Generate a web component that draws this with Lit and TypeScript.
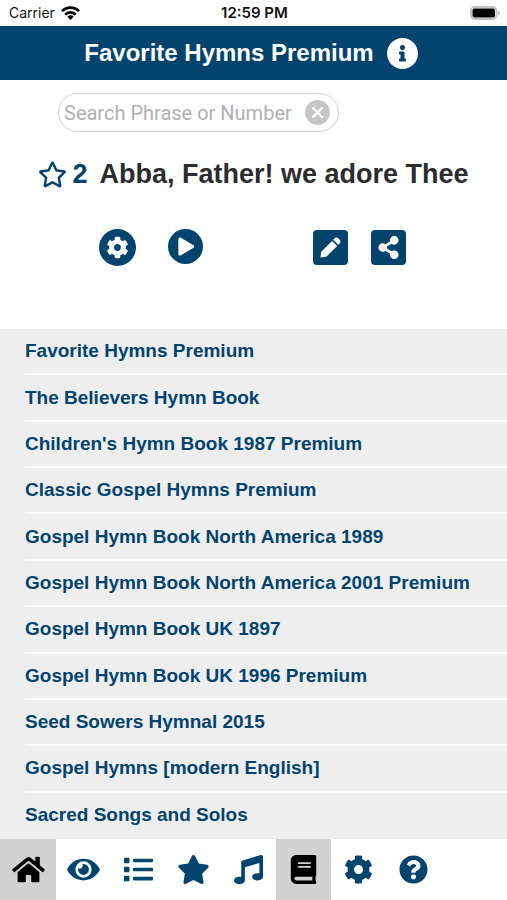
import { LitElement, html, css, svg } from "lit";
import { customElement, state } from "lit/decorators.js";
import { classMap } from "lit/directives/class-map.js";

interface Glyph {
  box: string;
  d: string;
}

const glyphs: Record<string, Glyph> = {
  home: {
    box: "0 0 576 512",
    d: "M280.37 148.26L96 300.11V464a16 16 0 0 0 16 16l112.06-.29a16 16 0 0 0 15.92-16V368a16 16 0 0 1 16-16h64a16 16 0 0 1 16 16v95.64a16 16 0 0 0 16 16.05L464 480a16 16 0 0 0 16-16V300L295.67 148.26a12.19 12.19 0 0 0-15.3 0zM571.6 251.47L488 182.56V44.05a12 12 0 0 0-12-12h-56a12 12 0 0 0-12 12v72.61L318.47 43a48 48 0 0 0-61 0L4.34 251.47a12 12 0 0 0-1.6 16.9l25.5 31A12 12 0 0 0 45.15 301l235.22-193.74a12.19 12.19 0 0 1 15.3 0L530.9 301a12 12 0 0 0 16.9-1.6l25.5-31a12 12 0 0 0-1.7-16.93z",
  },
  eye: {
    box: "0 0 576 512",
    d: "M572.52 241.4C518.29 135.59 410.93 64 288 64S57.68 135.64 3.48 241.41a32.35 32.35 0 0 0 0 29.19C57.71 376.41 165.07 448 288 448s230.32-71.64 284.52-177.41a32.35 32.35 0 0 0 0-29.19zM288 400a144 144 0 1 1 144-144 143.93 143.93 0 0 1-144 144zm0-240a95.31 95.31 0 0 0-25.31 3.79 47.85 47.85 0 0 1-66.9 66.9A95.78 95.78 0 1 0 288 160z",
  },
  list: {
    box: "-32 0 576 512",
    d: "M80 368H16a16 16 0 0 0-16 16v64a16 16 0 0 0 16 16h64a16 16 0 0 0 16-16v-64a16 16 0 0 0-16-16zm0-320H16A16 16 0 0 0 0 64v64a16 16 0 0 0 16 16h64a16 16 0 0 0 16-16V64a16 16 0 0 0-16-16zm0 160H16a16 16 0 0 0-16 16v64a16 16 0 0 0 16 16h64a16 16 0 0 0 16-16v-64a16 16 0 0 0-16-16zm416 176H176a16 16 0 0 0-16 16v32a16 16 0 0 0 16 16h320a16 16 0 0 0 16-16v-32a16 16 0 0 0-16-16zm0-320H176a16 16 0 0 0-16 16v32a16 16 0 0 0 16 16h320a16 16 0 0 0 16-16V80a16 16 0 0 0-16-16zm0 160H176a16 16 0 0 0-16 16v32a16 16 0 0 0 16 16h320a16 16 0 0 0 16-16v-32a16 16 0 0 0-16-16z",
  },
  star: {
    box: "0 0 576 512",
    d: "M259.3 17.8L194 150.2 47.9 171.5c-26.2 3.8-36.7 36.1-17.7 54.6l105.7 103-25 145.5c-4.5 26.3 23.2 46 46.4 33.7L288 439.6l130.7 68.7c23.2 12.2 50.9-7.4 46.4-33.7l-25-145.5 105.7-103c19-18.5 8.5-50.8-17.7-54.6L382 150.2 316.7 17.8c-11.7-23.6-45.6-23.9-57.4 0z",
  },
  starOutline: {
    box: "0 0 576 512",
    d: "M528.1 171.5L382 150.2 316.7 17.8c-11.7-23.6-45.6-23.9-57.4 0L194 150.2 47.9 171.5c-26.2 3.8-36.7 36.1-17.7 54.6l105.7 103-25 145.5c-4.5 26.3 23.2 46 46.4 33.7L288 439.6l130.7 68.7c23.2 12.2 50.9-7.4 46.4-33.7l-25-145.5 105.7-103c19-18.5 8.5-50.8-17.7-54.6zM388.6 312.3l23.7 138.4L288 385.4l-124.3 65.3 23.7-138.4-100.6-98 139-20.2 62.2-126 62.2 126 139 20.2-100.6 98z",
  },
  music: {
    box: "-32 0 576 512",
    d: "M470.38 1.51L150.41 96A32 32 0 0 0 128 126.51v261.41A139 139 0 0 0 96 384c-53 0-96 28.66-96 64s43 64 96 64 96-28.66 96-64V214.32l256-75v184.61a138.4 138.4 0 0 0-32-3.93c-53 0-96 28.66-96 64s43 64 96 64 96-28.65 96-64V32a32 32 0 0 0-41.62-30.49z",
  },
  book: {
    box: "-64 0 576 512",
    d: "M448 360V24c0-13.3-10.7-24-24-24H96C43 0 0 43 0 96v320c0 53 43 96 96 96h328c13.3 0 24-10.7 24-24v-16c0-7.5-3.5-14.3-8.9-18.7-4.2-15.4-4.2-59.3 0-74.7 5.4-4.3 8.9-11.1 8.9-18.6zM128 134c0-3.3 2.7-6 6-6h212c3.3 0 6 2.7 6 6v20c0 3.3-2.7 6-6 6H134c-3.3 0-6-2.7-6-6v-20zm0 64c0-3.3 2.7-6 6-6h212c3.3 0 6 2.7 6 6v20c0 3.3-2.7 6-6 6H134c-3.3 0-6-2.7-6-6v-20zm253.4 250H96c-17.7 0-32-14.3-32-32 0-17.6 14.4-32 32-32h285.4c-1.9 17.1-1.9 46.9 0 64z",
  },
  cog: {
    box: "-32 0 576 512",
    d: "M487.4 315.7l-42.6-24.6c4.3-23.2 4.3-47 0-70.2l42.6-24.6c4.9-2.8 7.1-8.6 5.5-14-11.1-35.6-30-67.8-54.7-94.6-3.8-4.1-10-5.1-14.8-2.3L380.8 110c-17.9-15.4-38.5-27.3-60.8-35.1V25.8c0-5.6-3.9-10.5-9.4-11.7-36.7-8.2-74.3-7.8-109.2 0-5.5 1.2-9.4 6.1-9.4 11.7V75c-22.2 7.9-42.8 19.8-60.8 35.1L88.7 85.5c-4.9-2.8-11-1.9-14.8 2.3-24.7 26.7-43.6 58.9-54.7 94.6-1.7 5.4.6 11.2 5.5 14L67.3 221c-4.3 23.2-4.3 47 0 70.2l-42.6 24.6c-4.9 2.8-7.1 8.6-5.5 14 11.1 35.6 30 67.8 54.7 94.6 3.8 4.1 10 5.1 14.8 2.3l42.6-24.6c17.9 15.4 38.5 27.3 60.8 35.1v49.2c0 5.6 3.9 10.5 9.4 11.7 36.7 8.2 74.3 7.8 109.2 0 5.5-1.2 9.4-6.1 9.4-11.7v-49.2c22.2-7.9 42.8-19.8 60.8-35.1l42.6 24.6c4.9 2.8 11 1.9 14.8-2.3 24.7-26.7 43.6-58.9 54.7-94.6 1.5-5.5-.7-11.3-5.6-14.1zM256 336c-44.1 0-80-35.9-80-80s35.9-80 80-80 80 35.9 80 80-35.9 80-80 80z",
  },
  help: {
    box: "-32 0 576 512",
    d: "M504 256c0 136.997-111.043 248-248 248S8 392.997 8 256C8 119.083 119.043 8 256 8s248 111.083 248 248zM262.655 90c-54.497 0-89.255 22.957-116.549 63.758-3.536 5.286-2.353 12.415 2.715 16.258l34.699 26.31c5.205 3.947 12.621 3.008 16.665-2.122 17.864-22.658 30.113-35.797 57.303-35.797 20.429 0 45.698 13.148 45.698 32.958 0 14.976-12.363 22.667-32.534 33.976C247.128 238.528 216 254.941 216 296v4c0 6.627 5.373 12 12 12h56c6.627 0 12-5.373 12-12v-1.333c0-28.462 83.186-29.647 83.186-106.667 0-58.002-60.165-102-116.531-102zM256 338c-25.365 0-46 20.635-46 46 0 25.364 20.635 46 46 46s46-20.636 46-46c0-25.365-20.635-46-46-46z",
  },
  info: {
    box: "8 8 496 496",
    d: "M256 8C119.043 8 8 119.083 8 256c0 136.997 111.043 248 248 248s248-111.003 248-248C504 119.083 392.957 8 256 8zm0 110c23.196 0 42 18.804 42 42s-18.804 42-42 42-42-18.804-42-42 18.804-42 42-42zm56 254c0 6.627-5.373 12-12 12h-88c-6.627 0-12-5.373-12-12v-24c0-6.627 5.373-12 12-12h12v-64h-12c-6.627 0-12-5.373-12-12v-24c0-6.627 5.373-12 12-12h64c6.627 0 12 5.373 12 12v100h12c6.627 0 12 5.373 12 12v24z",
  },
  pen: {
    box: "0 0 20 20",
    d: "M1.200 14L11.500 3.700l4.800 4.800L6 18.800l-5 .8a.6.6 0 0 1-.6-.6zM12.600 2.600l1.300-1.300a2.400 2.400 0 0 1 3.400 0l1.400 1.400a2.400 2.400 0 0 1 0 3.400l-1.300 1.300z",
  },
  share: {
    box: "-32 0 512 512",
    d: "M352 320c-22.608 0-43.387 7.819-59.79 20.895l-102.486-64.054a96.551 96.551 0 0 0 0-41.683l102.486-64.054C308.613 184.181 329.392 192 352 192c53.019 0 96-42.981 96-96S405.019 0 352 0s-96 42.981-96 96c0 7.158.79 14.13 2.276 20.841L155.79 180.895C139.387 167.819 118.608 160 96 160c-53.019 0-96 42.981-96 96s42.981 96 96 96c22.608 0 43.387-7.819 59.79-20.895l102.486 64.054A96.301 96.301 0 0 0 256 416c0 53.019 42.981 96 96 96s96-42.981 96-96-42.981-96-96-96z",
  },
  play: {
    box: "0 0 24 24",
    d: "M4.500 4.200c0-1.300 1.200-2.100 2.400-1.500l13.400 8c1 .6 1 2 0 2.600l-13.400 8c-1.200.6-2.400-.2-2.400-1.500z",
  },
};

const icon = (name: string, cls: string) => html`
  <svg class=${cls} viewBox=${glyphs[name].box} aria-hidden="true">
    ${svg`<path fill="currentColor" d=${glyphs[name].d}></path>`}
  </svg>
`;

const books = [
  "Favorite Hymns Premium",
  "The Believers Hymn Book",
  "Children's Hymn Book 1987 Premium",
  "Classic Gospel Hymns Premium",
  "Gospel Hymn Book North America 1989",
  "Gospel Hymn Book North America 2001 Premium",
  "Gospel Hymn Book UK 1897",
  "Gospel Hymn Book UK 1996 Premium",
  "Seed Sowers Hymnal 2015",
  "Gospel Hymns [modern English]",
  "Sacred Songs and Solos",
];

const tabs = [
  { name: "home", label: "Home" },
  { name: "eye", label: "View" },
  { name: "list", label: "Index" },
  { name: "star", label: "Favorites" },
  { name: "music", label: "Music" },
  { name: "book", label: "Books" },
  { name: "cog", label: "Settings" },
  { name: "help", label: "Help" },
];

@customElement("app-root")
export class AppRoot extends LitElement {
  @state() private active = "book";
  @state() private query = "";

  static styles = css`
    :host {
      --navy: #03446f;
      display: flex;
      flex-direction: column;
      min-height: 100vh;
      background: #fff;
      color: var(--navy);
      font-family: "Liberation Sans", Arial, sans-serif;
    }
    * {
      box-sizing: border-box;
    }
    button {
      display: flex;
      align-items: center;
      justify-content: center;
      padding: 0;
      border: 0;
      background: none;
      color: inherit;
      font: inherit;
      cursor: pointer;
    }
    svg {
      display: block;
      flex: none;
    }
    .status {
      display: grid;
      grid-template-columns: 1fr auto 1fr;
      align-items: center;
      height: 26px;
      padding: 0 7px 0 9px;
      color: #111;
      font: 14px/26px Inter, sans-serif;
    }
    .carrier {
      display: flex;
      align-items: center;
      gap: 6px;
    }
    .wifi {
      width: 19px;
      height: 14px;
    }
    .clock {
      font-size: 15px;
      font-weight: 600;
    }
    .battery {
      justify-self: end;
      width: 30px;
      height: 14px;
    }
    .bar {
      display: flex;
      align-items: center;
      justify-content: center;
      gap: 13px;
      height: 54px;
      padding-right: 5px;
      background: var(--navy);
      color: #fff;
    }
    .bar h1 {
      margin: 0;
      font-size: 24px;
      line-height: 32px;
    }
    .info {
      width: 31px;
      height: 31px;
    }
    .search {
      display: flex;
      align-items: center;
      width: 281px;
      height: 39px;
      margin: 13px 0 0 58px;
      padding: 0 8px 0 5px;
      border: 1px solid #d2d2d4;
      border-radius: 20px;
    }
    .search input {
      flex: 1;
      min-width: 0;
      padding: 0;
      border: 0;
      outline: 0;
      background: none;
      color: #333;
      font: 20px/24px Roboto, sans-serif;
    }
    .search input::placeholder {
      color: #b0b0b2;
      opacity: 1;
    }
    .clear {
      width: 25px;
      height: 25px;
    }
    .hymn {
      display: flex;
      align-items: center;
      justify-content: center;
      height: 36px;
      margin-top: 24px;
      font-size: 27px;
      line-height: 36px;
      font-weight: 700;
    }
    .fav {
      gap: 5px;
      margin-right: 12px;
    }
    .hollow {
      width: 29px;
      height: 27px;
    }
    .hymn h2 {
      margin: 0;
      color: #2c2c2e;
      font: inherit;
    }
    .actions {
      display: flex;
      justify-content: space-between;
      align-items: center;
      margin: 37px 101px 63px 99px;
    }
    .group {
      display: flex;
    }
    .left {
      gap: 32px;
    }
    .right {
      gap: 23px;
    }
    .action {
      width: 35px;
      height: 35px;
      border-radius: 4px;
      background: var(--navy);
      color: #fff;
    }
    .round {
      border-radius: 50%;
    }
    .large {
      width: 37px;
      height: 37px;
    }
    .medium {
      width: 25px;
      height: 25px;
    }
    .small {
      width: 23px;
      height: 23px;
    }
    .tiny {
      width: 21px;
      height: 21px;
    }
    .books {
      display: flex;
      flex: 1;
      flex-direction: column;
      margin: 0;
      padding: 0 0 0 25px;
      background: #eee;
      list-style: none;
    }
    .books li {
      display: flex;
      flex: 1;
      min-height: 44px;
      border-bottom: 2px solid #fafafa;
    }
    .books li:last-child {
      border-bottom-color: transparent;
    }
    .books a {
      flex: 1;
      align-self: center;
      color: inherit;
      font-size: 19px;
      line-height: 24px;
      font-weight: 700;
      text-decoration: none;
      white-space: nowrap;
    }
    .tabs {
      display: grid;
      grid-template-columns: 56px repeat(7, 55px);
      height: 61px;
      background: #fff;
    }
    .tab.shaded {
      background: #d2d2d2;
      color: #000;
    }
    .tabicon {
      width: 33px;
      height: 29px;
    }
  `;

  private onInput(e: Event) {
    this.query = (e.target as HTMLInputElement).value;
  }

  render() {
    return html`
      <div class="status">
        <div class="carrier">
          <span>Carrier</span>
          <svg class="wifi" viewBox="0 0 19 14" aria-hidden="true">
            <g fill="none" stroke="#000" stroke-width="2.600">
              <path d="M1 5.200a12 12 0 0 1 17 0"></path>
              <path d="M4.200 8.600a7.500 7.500 0 0 1 10.600 0"></path>
            </g>
            <path d="M6.300 10.700a4.500 4.500 0 0 1 6.400 0L9.500 13.900z"></path>
          </svg>
        </div>
        <span class="clock">12:59 PM</span>
        <svg class="battery" viewBox="0 0 30 14" aria-hidden="true">
          <rect x="1" y="1" width="25.500" height="12" rx="4" fill="#fff" stroke="#c2c2c2" stroke-width="2"></rect>
          <rect x="2.500" y="2.500" width="22.500" height="9" rx="2"></rect>
          <path d="M28.200 4.500c2 .8 2 4.200 0 5z" fill="#b4b4b4"></path>
        </svg>
      </div>
      <header class="bar">
        <h1>Favorite Hymns Premium</h1>
        <button aria-label="About">${icon("info", "info")}</button>
      </header>
      <main>
        <div class="search">
          <input
            type="text"
            aria-label="Search hymns"
            placeholder="Search Phrase or Number"
            .value=${this.query}
            @input=${this.onInput}
          />
          <button aria-label="Clear search" @click=${() => (this.query = "")}>
            <svg class="clear" viewBox="0 0 25 25" aria-hidden="true">
              <circle cx="12.500" cy="12.500" r="12.500" fill="#c6c6c8"></circle>
              <path d="M7.500 7.500l10 10m0-10l-10 10" stroke="#fff" stroke-width="2.400"></path>
            </svg>
          </button>
        </div>
        <div class="hymn">
          <button class="fav" aria-label="Favorite hymn 2">
            ${icon("starOutline", "hollow")}<span>2</span>
          </button>
          <h2>Abba, Father! we adore Thee</h2>
        </div>
        <div class="actions">
          <div class="group left">
            <button class="action round large" aria-label="Hymn settings">${icon("cog", "medium")}</button>
            <button class="action round" aria-label="Play">${icon("play", "small")}</button>
          </div>
          <div class="group right">
            <button class="action" aria-label="Edit">${icon("pen", "tiny")}</button>
            <button class="action" aria-label="Share">${icon("share", "small")}</button>
          </div>
        </div>
      </main>
      <ul class="books">
        ${books.map((title) => html`<li><a href="#">${title}</a></li>`)}
      </ul>
      <nav class="tabs">
        ${tabs.map(
          (t) => html`
            <button
              class=${classMap({ tab: true, shaded: t.name === "home" || t.name === this.active })}
              aria-label=${t.label}
              @click=${() => (this.active = t.name)}
            >
              ${icon(t.name, "tabicon")}
            </button>
          `
        )}
      </nav>
    `;
  }
}
